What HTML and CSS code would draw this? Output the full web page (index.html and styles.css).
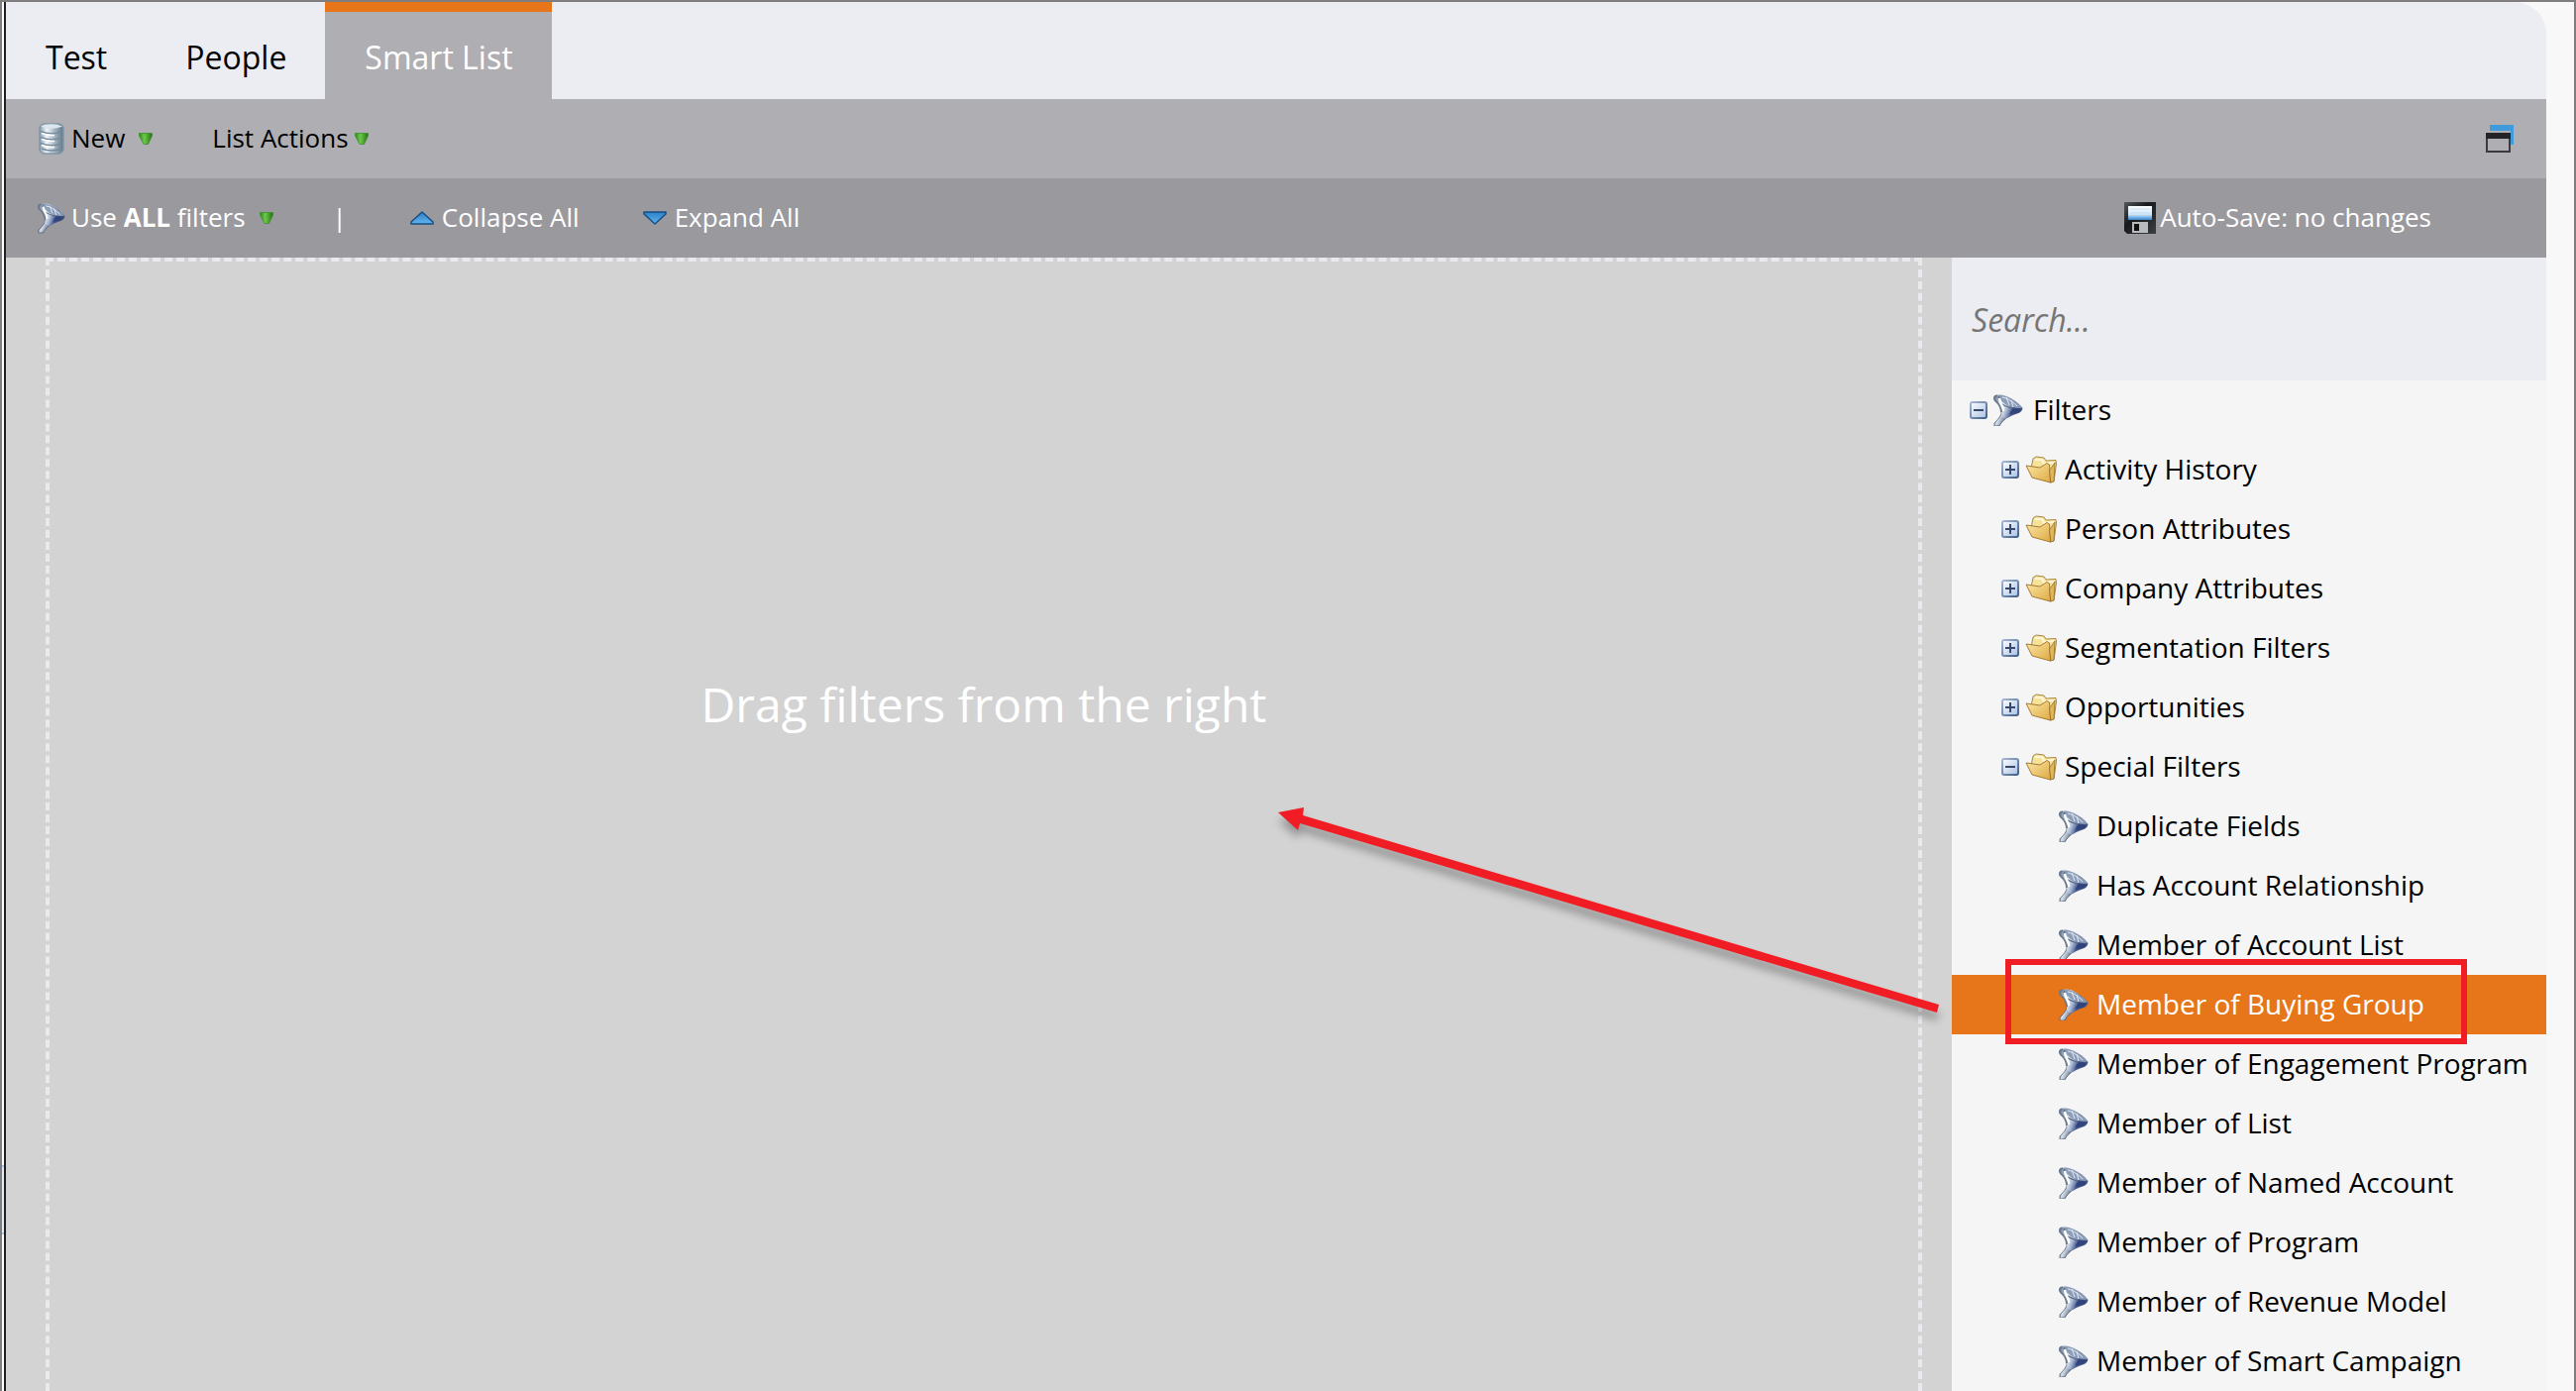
FILE: index.html
```html
<!DOCTYPE html>
<html lang="en">
<head>
<meta charset="utf-8">
<title>Smart List</title>
<link rel="stylesheet" href="styles.css">
</head>
<body>
<svg class="sprite" width="0" height="0" aria-hidden="true">
  <defs>
    <linearGradient id="g-cone" x1="0" y1=".3" x2="1" y2=".6"><stop offset="0" stop-color="#7e8da3"/><stop offset=".3" stop-color="#f2f6fb"/><stop offset=".5" stop-color="#a9b8d2"/><stop offset=".7" stop-color="#3f5288"/><stop offset="1" stop-color="#44557f"/></linearGradient>
    <linearGradient id="g-stem" x1="0" y1="0" x2="1" y2=".5"><stop offset="0" stop-color="#4d5a6c"/><stop offset=".45" stop-color="#d5dfec"/><stop offset="1" stop-color="#3b4763"/></linearGradient>
    <linearGradient id="g-green" x1="0" y1="0" x2="1" y2="0"><stop offset="0" stop-color="#2f8a1c"/><stop offset=".4" stop-color="#6cc94a"/><stop offset="1" stop-color="#237012"/></linearGradient>
    <linearGradient id="g-blue" x1="0" y1="0" x2="0" y2="1"><stop offset="0" stop-color="#2c7fc4"/><stop offset="1" stop-color="#62b4f0"/></linearGradient>
    <linearGradient id="g-db" x1="0" y1="0" x2="1" y2="0"><stop offset="0" stop-color="#8b9dad"/><stop offset=".3" stop-color="#f0f6fa"/><stop offset=".65" stop-color="#9fb2c2"/><stop offset="1" stop-color="#5f7484"/></linearGradient>
    <linearGradient id="g-folder" x1="0" y1="0" x2="1" y2="1"><stop offset="0" stop-color="#fbe9a8"/><stop offset="1" stop-color="#dfa943"/></linearGradient>
    <linearGradient id="g-box" x1="0" y1="0" x2="1" y2="1"><stop offset="0" stop-color="#ffffff"/><stop offset="1" stop-color="#a9c0e2"/></linearGradient>
    <linearGradient id="g-edge" x1="0" y1="0" x2="1" y2="1"><stop offset="0" stop-color="#a5b8d4"/><stop offset="1" stop-color="#3f5f8e"/></linearGradient>
    <linearGradient id="g-label" x1="0" y1="0" x2="0" y2="1"><stop offset="0" stop-color="#ffffff"/><stop offset=".6" stop-color="#cfe6f8"/><stop offset="1" stop-color="#2f82cc"/></linearGradient>
    <linearGradient id="g-disk" x1="0" y1="0" x2="1" y2="1"><stop offset="0" stop-color="#55585c"/><stop offset=".4" stop-color="#17191c"/><stop offset="1" stop-color="#3c3f43"/></linearGradient>
  </defs>
  <symbol id="funnel" viewBox="0 0 30 32">
    <path d="M8 16C9 20 6 24 1 29V32H6C8 28 11 25 16 22Z" fill="url(#g-stem)" stroke="#4a586f" stroke-width=".8"/>
    <path d="M1 2C4 0 10 0 14 2C20 5 26 9 29.500 14C29 17 27 18.500 24 19.500C20 21 17 22 15 23.500C12 25 9 24 8 21C9 17 8 13 5 9C2 7 0 5 1 2Z" fill="url(#g-cone)"/>
    <path d="M5 1C11 0 16 3 21 6.500C25 9 27 11 29 14C23 15 17 13 12 10C8 7 5 4 5 1Z" fill="#8c9db8"/>
    <path d="M9 3C15 4 20 8 24 12M13 3L16 11M18 6L20 13" fill="none" stroke="#e3eaf4" stroke-width="1"/>
    <path d="M6 2C4 4 6 8 9 10C15 14 22 15 29 14" fill="none" stroke="#5a6a86" stroke-width="1.200"/>
    <path d="M6 4C6 8 10 12 10 17" fill="none" stroke="#fff" stroke-width="2.500"/>
    <path d="M16 20L20 13.500L29 14.500L25 18.500Z" fill="#2c3f78" opacity=".75"/>
    <path d="M4 1.500C1 1 0 4 2 6.500C5 9 8 14 8 18" fill="none" stroke="#6b7a8c" stroke-width="2"/>
  </symbol>
  <symbol id="database" viewBox="0 0 28 32">
    <rect x="2" y="1" width="24" height="30" rx="5" fill="url(#g-db)" stroke="#8296a6" stroke-width="1.500"/>
    <path d="M3 3.500Q14-1 25 3.500Q14 8 3 3.500Z" fill="#dce6ee"/>
    <path d="M3 8.500Q14 13 25 8.500M3 14.500Q14 19 25 14.500M3 20.500Q14 25 25 20.500M4 26Q14 30 24 26" fill="none" stroke="#768b9b" stroke-width="1.500"/>
    <path d="M4 10.500Q11 13 17 12.500M4 16.500Q11 19 17 18.500M4 22.500Q11 25 17 24.500" fill="none" stroke="#fff" stroke-width="1.500"/>
  </symbol>
  <symbol id="caret" viewBox="0 0 14 12"><path d="M.5 .5H13.500V3L9.500 11.500H5L.5 3Z" fill="url(#g-green)" stroke="#3c8f2b" stroke-width=".8"/></symbol>
  <symbol id="up" viewBox="0 0 24 14"><path d="M12 1L23 11V13H1V11Z" fill="url(#g-blue)" stroke="#164e82" stroke-width="1.500" stroke-linejoin="round"/></symbol>
  <symbol id="down" viewBox="0 0 24 14"><path d="M12 13L1 3V1H23V3Z" fill="url(#g-blue)" stroke="#164e82" stroke-width="1.500" stroke-linejoin="round"/></symbol>
  <symbol id="folder" viewBox="0 0 32 28">
    <path d="M6 13L8 3L11 1L19 2L21 5L31 4.500L31.500 8L29 26L25 27Z" fill="#f7e29a" stroke="#a88a48" stroke-width="1"/>
    <path d="M10 4L17 4L19 8L29 7" fill="none" stroke="#fff8d8" stroke-width="2"/>
    <path d="M1 10L15 12L22 7.500L24.500 9L25.500 27L7 22Z" fill="url(#g-folder)" stroke="#a37b31" stroke-width="1" stroke-linejoin="round"/>
    <path d="M26 27L24.500 15L30 7L29 26Z" fill="#e3b65a" stroke="#8f6f33" stroke-width=".8"/>
  </symbol>
  <symbol id="minus" viewBox="0 0 18 18"><rect x="1" y="1" width="16" height="16" rx="2" fill="url(#g-box)" stroke="url(#g-edge)" stroke-width="2"/><path d="M4 9H14" stroke="#34496d" stroke-width="2"/></symbol>
  <symbol id="plus" viewBox="0 0 18 18"><rect x="1" y="1" width="16" height="16" rx="2" fill="url(#g-box)" stroke="url(#g-edge)" stroke-width="2"/><path d="M4 9H14M9 4V14" stroke="#34496d" stroke-width="2"/></symbol>
  <symbol id="disk" viewBox="0 0 32 32">
    <path d="M0 0H32V32H3L0 29Z" fill="url(#g-disk)"/>
    <rect x="4" y="4" width="24" height="14" fill="url(#g-label)"/>
    <path d="M6 7H26M6 11H26" stroke="#c4dff3" stroke-width="1"/>
    <rect x="8" y="20" width="16" height="11" fill="#b9bbbf"/><rect x="10" y="22" width="5" height="7" fill="#111"/>
  </symbol>
  <symbol id="windows" viewBox="0 0 30 30">
    <path d="M5 1H29V21H26V7H5Z" fill="#3f9bdb"/>
    <rect x="2" y="10" width="23" height="18" fill="none" stroke="#3b3b3d" stroke-width="2"/><path d="M1 9H26V15H1Z" fill="#242426"/>
  </symbol>
</svg>

<div class="frame">
  <div class="edge"></div>
  <main class="app">
    <nav class="tabs">
      <a class="tab" href="#test">Test</a>
      <a class="tab" href="#people">People</a>
      <a class="tab tab-active" href="#smart-list">Smart List</a>
    </nav>
    <div class="bar bar-main">
      <button class="tool tool-new" type="button"><svg class="ico-28"><use href="#database"/></svg><span>New</span><svg class="ico-caret"><use href="#caret"/></svg></button>
      <button class="tool tool-list" type="button"><span>List Actions</span><svg class="ico-caret"><use href="#caret"/></svg></button>
      <button class="tool tool-window" type="button" aria-label="Open in new window"><svg class="ico-30"><use href="#windows"/></svg></button>
    </div>
    <div class="bar bar-sub">
      <button class="tool tool-new" type="button"><svg class="ico-28"><use href="#funnel"/></svg><span>Use <b>ALL</b> filters</span><svg class="ico-caret"><use href="#caret"/></svg></button>
      <span class="divider">|</span>
      <button class="tool" type="button"><svg class="ico-arrow"><use href="#up"/></svg><span>Collapse All</span></button>
      <button class="tool tool-expand" type="button"><svg class="ico-arrow"><use href="#down"/></svg><span>Expand All</span></button>
      <div class="tool save"><svg class="ico-32"><use href="#disk"/></svg><span>Auto-Save: no changes</span></div>
    </div>
    <div class="work">
      <section class="canvas">
        <div class="drop"><p class="hint">Drag filters from the right</p></div>
        <svg class="arrow" viewBox="0 0 690 230" aria-hidden="true"><path d="M10 20L36 15L35 23L677 214L675 222L32 31L30 38Z"/></svg>
      </section>
      <aside class="side">
        <input class="search" type="search" placeholder="Search..." aria-label="Search filters">
        <ul class="tree">
          <li class="row l1"><button class="toggle" type="button" aria-label="Collapse"><svg class="ico-18"><use href="#minus"/></svg></button><a class="item" href="#"><svg class="ico-funnel"><use href="#funnel"/></svg><span>Filters</span></a></li>
          <li class="row l2"><button class="toggle" type="button" aria-label="Expand"><svg class="ico-18"><use href="#plus"/></svg></button><a class="item" href="#"><svg class="ico-folder"><use href="#folder"/></svg><span>Activity History</span></a></li>
          <li class="row l2"><button class="toggle" type="button" aria-label="Expand"><svg class="ico-18"><use href="#plus"/></svg></button><a class="item" href="#"><svg class="ico-folder"><use href="#folder"/></svg><span>Person Attributes</span></a></li>
          <li class="row l2"><button class="toggle" type="button" aria-label="Expand"><svg class="ico-18"><use href="#plus"/></svg></button><a class="item" href="#"><svg class="ico-folder"><use href="#folder"/></svg><span>Company Attributes</span></a></li>
          <li class="row l2"><button class="toggle" type="button" aria-label="Expand"><svg class="ico-18"><use href="#plus"/></svg></button><a class="item" href="#"><svg class="ico-folder"><use href="#folder"/></svg><span>Segmentation Filters</span></a></li>
          <li class="row l2"><button class="toggle" type="button" aria-label="Expand"><svg class="ico-18"><use href="#plus"/></svg></button><a class="item" href="#"><svg class="ico-folder"><use href="#folder"/></svg><span>Opportunities</span></a></li>
          <li class="row l2"><button class="toggle" type="button" aria-label="Collapse"><svg class="ico-18"><use href="#minus"/></svg></button><a class="item" href="#"><svg class="ico-folder"><use href="#folder"/></svg><span>Special Filters</span></a></li>
          <li class="row l3"><a class="item" href="#"><svg class="ico-funnel"><use href="#funnel"/></svg><span>Duplicate Fields</span></a></li>
          <li class="row l3"><a class="item" href="#"><svg class="ico-funnel"><use href="#funnel"/></svg><span>Has Account Relationship</span></a></li>
          <li class="row l3"><a class="item" href="#"><svg class="ico-funnel"><use href="#funnel"/></svg><span>Member of Account List</span></a></li>
          <li class="row l3 selected"><a class="item" href="#"><svg class="ico-funnel"><use href="#funnel"/></svg><span>Member of Buying Group</span></a><span class="callout"></span></li>
          <li class="row l3"><a class="item" href="#"><svg class="ico-funnel"><use href="#funnel"/></svg><span>Member of Engagement Program</span></a></li>
          <li class="row l3"><a class="item" href="#"><svg class="ico-funnel"><use href="#funnel"/></svg><span>Member of List</span></a></li>
          <li class="row l3"><a class="item" href="#"><svg class="ico-funnel"><use href="#funnel"/></svg><span>Member of Named Account</span></a></li>
          <li class="row l3"><a class="item" href="#"><svg class="ico-funnel"><use href="#funnel"/></svg><span>Member of Program</span></a></li>
          <li class="row l3"><a class="item" href="#"><svg class="ico-funnel"><use href="#funnel"/></svg><span>Member of Revenue Model</span></a></li>
          <li class="row l3"><a class="item" href="#"><svg class="ico-funnel"><use href="#funnel"/></svg><span>Member of Smart Campaign</span></a></li>
        </ul>
      </aside>
    </div>
  </main>
</div>
</body>
</html>
```
FILE: styles.css
```css
* { box-sizing: border-box; }
body {
  margin: 0;
  background: #f8f8f8;
  color: #000;
  font-family: "Open Sans", "Noto Sans", sans-serif;
  font-size: 26px;
}
a { color: inherit; text-decoration: none; }
button { margin: 0; padding: 0; border: 0; background: none; color: inherit; font: inherit; cursor: pointer; }
svg { display: block; flex: none; }
.sprite { position: absolute; }

.frame {
  display: flex;
  min-height: 100vh;
  border: 2px solid #7f7d7e;
  border-bottom: 0;
  padding-right: 28px;
}
.edge {
  flex: none;
  width: 4px;
  border-right: 2px solid #1f1f21;
  background: linear-gradient(#fff 1174px, #a6cdf2 1174px 1176px, #e1edfb 1176px 1242px, #a6cdf2 1242px 1244px, #fff 1244px);
}
.app { flex: 1; min-width: 0; display: flex; flex-direction: column; }

.tabs { display: flex; height: 98px; background: #ecedf2; border-top-right-radius: 32px; font-size: 32px; }
.tab { display: flex; align-items: center; padding: 12px 39px 0 40px; }
.tab-active { background: #afaeb3; color: #fff; padding-top: 2px; border-top: 10px solid #e7761b; }

.bar { display: flex; align-items: center; height: 80px; padding: 0 32px; }
.bar-main { background: #afaeb3; }
.bar-sub { background: #9a999e; color: #fff; }
.tool { display: flex; align-items: center; gap: 8px; white-space: nowrap; }
.tool span, .divider { padding-bottom: 2px; }
.tool-new { gap: 6px; }
.tool-new .ico-caret { margin-left: 8px; }
.tool-list { gap: 6px; margin-left: 60px; }
.tool-window { margin-left: auto; }
.divider { margin: 0 64px 0 60px; }
.tool-expand { margin-left: 64px; }
.save { gap: 4px; margin-left: auto; margin-right: 84px; }
.ico-18 { width: 18px; height: 18px; }
.ico-28 { width: 28px; height: 32px; }
.ico-30 { width: 30px; height: 30px; }
.ico-32 { width: 32px; height: 32px; }
.ico-caret { width: 14px; height: 12px; }
.ico-arrow { width: 24px; height: 14px; }
.ico-funnel { width: 30px; height: 32px; }
.ico-folder { width: 32px; height: 28px; }

.work { flex: 1; display: flex; }
.canvas { position: relative; flex: 1; min-width: 0; display: flex; padding: 0 30px 0 40px; background: #d3d3d3; }
.drop { flex: 1; border: 4px dashed #e9e9ee; border-bottom: 0; padding-top: 415px; }
.hint { margin: 0; color: #fff; font-size: 48px; line-height: 64px; text-align: center; }
.arrow { position: absolute; top: 540px; right: 0; width: 690px; height: 230px; fill: #f01e24; filter: drop-shadow(0 8px 4px rgba(0, 0, 0, .3)); }

.side { flex: none; width: 600px; background: #f5f5f5; }
.search {
  display: block; width: 100%; height: 124px; margin: 0; padding: 0 20px;
  border: 0; outline: 0; background: #ecedf2; font: italic 32px "Open Sans", "Noto Sans", sans-serif;
}
.search::placeholder { color: #757575; opacity: 1; }
.tree { margin: 0; padding: 0; list-style: none; font-size: 28px; }
.row { position: relative; display: flex; align-items: center; gap: 6px; height: 60px; white-space: nowrap; }
.item { display: flex; align-items: center; gap: 8px; }
.item span { padding-bottom: 2px; }
.l1 { padding-left: 18px; }
.l1 .item { gap: 10px; }
.l2 { padding-left: 50px; }
.l3 { padding-left: 108px; }
.selected { background: #e7761b; color: #fff; }
.callout { position: absolute; left: 54px; top: -16px; width: 466px; height: 86px; border: 6px solid #f01e24; pointer-events: none; }
```
